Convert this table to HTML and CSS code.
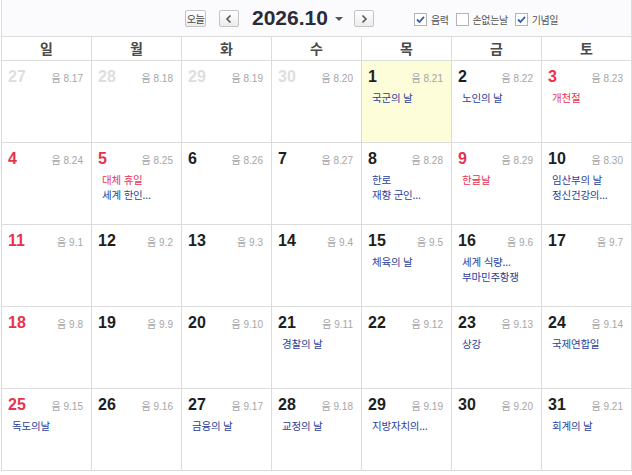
FILE: index.html
```html
<!DOCTYPE html>
<html lang="ko">
<head>
<meta charset="utf-8">
<title>2026.10 달력</title>
<link rel="stylesheet" href="styles.css">
</head>
<body>
<div class="cal">
  <div class="topbar">
    <button class="btn btn-today">오늘</button>
    <button class="btn btn-nav btn-prev" aria-label="이전"><svg width="8" height="10" viewBox="0 0 8 10"><path d="M5.5 1.5 L2 5 L5.5 8.5" fill="none" stroke="#555" stroke-width="1.6"/></svg></button>
    <div class="title">2026.10</div>
    <span class="caret"></span>
    <button class="btn btn-nav btn-next" aria-label="다음"><svg width="8" height="10" viewBox="0 0 8 10"><path d="M2.5 1.5 L6 5 L2.5 8.5" fill="none" stroke="#555" stroke-width="1.6"/></svg></button>
    <div class="opts">
      <label class="opt"><span class="cb on"><svg width="11" height="11" viewBox="0 0 11 11"><path d="M2 5.5 L4.5 8 L9 2.8" fill="none" stroke="#2f62a8" stroke-width="1.8"/></svg></span>음력</label>
      <label class="opt"><span class="cb"></span>손없는날</label>
      <label class="opt"><span class="cb on"><svg width="11" height="11" viewBox="0 0 11 11"><path d="M2 5.5 L4.5 8 L9 2.8" fill="none" stroke="#2f62a8" stroke-width="1.8"/></svg></span>기념일</label>
    </div>
  </div>
  <div class="week">
    <div class="wd">일</div><div class="wd">월</div><div class="wd">화</div><div class="wd">수</div><div class="wd">목</div><div class="wd">금</div><div class="wd">토</div>
  </div>
  <div class="grid">
    <div class="cell other"><div class="top"><span class="num">27</span><span class="lunar">음 8.17</span></div></div>
    <div class="cell other"><div class="top"><span class="num">28</span><span class="lunar">음 8.18</span></div></div>
    <div class="cell other"><div class="top"><span class="num">29</span><span class="lunar">음 8.19</span></div></div>
    <div class="cell other"><div class="top"><span class="num">30</span><span class="lunar">음 8.20</span></div></div>
    <div class="cell today"><div class="top"><span class="num">1</span><span class="lunar">음 8.21</span></div><div class="ev">국군의 날</div></div>
    <div class="cell"><div class="top"><span class="num">2</span><span class="lunar">음 8.22</span></div><div class="ev">노인의 날</div></div>
    <div class="cell hol"><div class="top"><span class="num">3</span><span class="lunar">음 8.23</span></div><div class="ev red">개천절</div></div>

    <div class="cell hol"><div class="top"><span class="num">4</span><span class="lunar">음 8.24</span></div></div>
    <div class="cell hol"><div class="top"><span class="num">5</span><span class="lunar">음 8.25</span></div><div class="ev red">대체 휴일</div><div class="ev">세계 한인...</div></div>
    <div class="cell"><div class="top"><span class="num">6</span><span class="lunar">음 8.26</span></div></div>
    <div class="cell"><div class="top"><span class="num">7</span><span class="lunar">음 8.27</span></div></div>
    <div class="cell"><div class="top"><span class="num">8</span><span class="lunar">음 8.28</span></div><div class="ev">한로</div><div class="ev">재향 군인...</div></div>
    <div class="cell hol"><div class="top"><span class="num">9</span><span class="lunar">음 8.29</span></div><div class="ev red">한글날</div></div>
    <div class="cell"><div class="top"><span class="num">10</span><span class="lunar">음 8.30</span></div><div class="ev">임산부의 날</div><div class="ev">정신건강의...</div></div>

    <div class="cell hol"><div class="top"><span class="num">11</span><span class="lunar">음 9.1</span></div></div>
    <div class="cell"><div class="top"><span class="num">12</span><span class="lunar">음 9.2</span></div></div>
    <div class="cell"><div class="top"><span class="num">13</span><span class="lunar">음 9.3</span></div></div>
    <div class="cell"><div class="top"><span class="num">14</span><span class="lunar">음 9.4</span></div></div>
    <div class="cell"><div class="top"><span class="num">15</span><span class="lunar">음 9.5</span></div><div class="ev">체육의 날</div></div>
    <div class="cell"><div class="top"><span class="num">16</span><span class="lunar">음 9.6</span></div><div class="ev">세계 식량...</div><div class="ev">부마민주항쟁</div></div>
    <div class="cell"><div class="top"><span class="num">17</span><span class="lunar">음 9.7</span></div></div>

    <div class="cell hol"><div class="top"><span class="num">18</span><span class="lunar">음 9.8</span></div></div>
    <div class="cell"><div class="top"><span class="num">19</span><span class="lunar">음 9.9</span></div></div>
    <div class="cell"><div class="top"><span class="num">20</span><span class="lunar">음 9.10</span></div></div>
    <div class="cell"><div class="top"><span class="num">21</span><span class="lunar">음 9.11</span></div><div class="ev">경찰의 날</div></div>
    <div class="cell"><div class="top"><span class="num">22</span><span class="lunar">음 9.12</span></div></div>
    <div class="cell"><div class="top"><span class="num">23</span><span class="lunar">음 9.13</span></div><div class="ev">상강</div></div>
    <div class="cell"><div class="top"><span class="num">24</span><span class="lunar">음 9.14</span></div><div class="ev">국제연합일</div></div>

    <div class="cell hol"><div class="top"><span class="num">25</span><span class="lunar">음 9.15</span></div><div class="ev">독도의날</div></div>
    <div class="cell"><div class="top"><span class="num">26</span><span class="lunar">음 9.16</span></div></div>
    <div class="cell"><div class="top"><span class="num">27</span><span class="lunar">음 9.17</span></div><div class="ev">금융의 날</div></div>
    <div class="cell"><div class="top"><span class="num">28</span><span class="lunar">음 9.18</span></div><div class="ev">교정의 날</div></div>
    <div class="cell"><div class="top"><span class="num">29</span><span class="lunar">음 9.19</span></div><div class="ev">지방자치의...</div></div>
    <div class="cell"><div class="top"><span class="num">30</span><span class="lunar">음 9.20</span></div></div>
    <div class="cell"><div class="top"><span class="num">31</span><span class="lunar">음 9.21</span></div><div class="ev">회계의 날</div></div>
  </div>
</div>
</body>
</html>
```
FILE: styles.css
```css
* { box-sizing: border-box; }
html, body { margin: 0; padding: 0; background: #fff; }
body {
  font-family: "Liberation Sans", "Noto Sans CJK KR", sans-serif;
  color: #222;
}
.cal {
  margin-left: 1px;
  width: 631px;
  border-left: 1px solid #dcdcdc;
}
.topbar {
  height: 37px;
  background: #fbfafd;
  border-bottom: 1px solid #dcdcdc;
  border-right: 1px solid #dcdcdc;
  display: flex;
  align-items: center;
  padding-left: 183px;
}
.btn {
  height: 17px;
  padding: 0;
  border: 1px solid #c4c4c4;
  border-radius: 2px;
  background: linear-gradient(#ffffff, #ececec);
  font-family: "Noto Sans CJK KR", sans-serif;
  font-size: 10px;
  color: #444;
  display: flex;
  align-items: center;
  justify-content: center;
  line-height: 1;
}
.btn-today { width: 21px; margin-top: 1px; letter-spacing: -0.5px; }
.btn-nav { width: 20px; margin-top: 1px; }
.btn-prev { margin-left: 13px; }
.title {
  margin-left: 13px;
  font-size: 21px;
  font-weight: 700;
  color: #2a2c3a;
  line-height: 24px;
}
.caret {
  margin-left: 7px;
  margin-top: 2px;
  width: 0; height: 0;
  border-left: 4px solid transparent;
  border-right: 4px solid transparent;
  border-top: 4px solid #555;
}
.btn-next { margin-left: 11px; }
.opts {
  display: flex;
  align-items: center;
  margin-left: 40px;
  margin-top: 2px;
}
.opt {
  display: flex;
  align-items: center;
  font-family: "Noto Sans CJK KR", sans-serif;
  font-size: 10px;
  color: #555;
  margin-right: 7px;
  letter-spacing: -0.4px;
}
.cb {
  width: 13px; height: 13px;
  border: 1px solid #b3b3b3;
  background: #fff;
  margin-right: 4px;
  display: flex;
  align-items: center;
  justify-content: center;
}
.week {
  display: grid;
  grid-template-columns: repeat(7, 90px);
}
.wd {
  height: 24px;
  border-right: 1px solid #dcdcdc;
  border-bottom: 1px solid #dcdcdc;
  text-align: center;
  font-family: "Noto Sans CJK KR", sans-serif;
  font-weight: 700;
  font-size: 14px;
  line-height: 22px;
  color: #4a4a4a;
}
.grid {
  display: grid;
  grid-template-columns: repeat(7, 90px);
  grid-auto-rows: 82px;
}
.cell {
  border-right: 1px solid #dcdcdc;
  border-bottom: 1px solid #dcdcdc;
  padding: 6px 8px 0 6px;
  background: #fff;
}
.cell.today { background: #fdfdd9; }
.top {
  display: flex;
  justify-content: space-between;
  align-items: center;
  height: 20px;
  margin-bottom: 3px;
}
.num {
  font-size: 16px;
  font-weight: 700;
  color: #1e1e1e;
  line-height: 20px;
}
.lunar {
  font-family: "Noto Sans CJK KR", sans-serif;
  font-size: 10px;
  color: #a6a6a6;
  margin-top: 1px;
}
.lunar { font-family: "Liberation Sans", "Noto Sans CJK KR", sans-serif; }
.cell.hol .num { color: #e8334b; }
.cell.other .num { color: #dedede; }
.ev {
  padding-left: 4px;
  font-family: "Noto Sans CJK KR", sans-serif;
  font-size: 10.5px;
  line-height: 15px;
  color: #2b3f9c;
  white-space: nowrap;
  letter-spacing: -0.2px;
}
.ev.red { color: #e63456; }
```
